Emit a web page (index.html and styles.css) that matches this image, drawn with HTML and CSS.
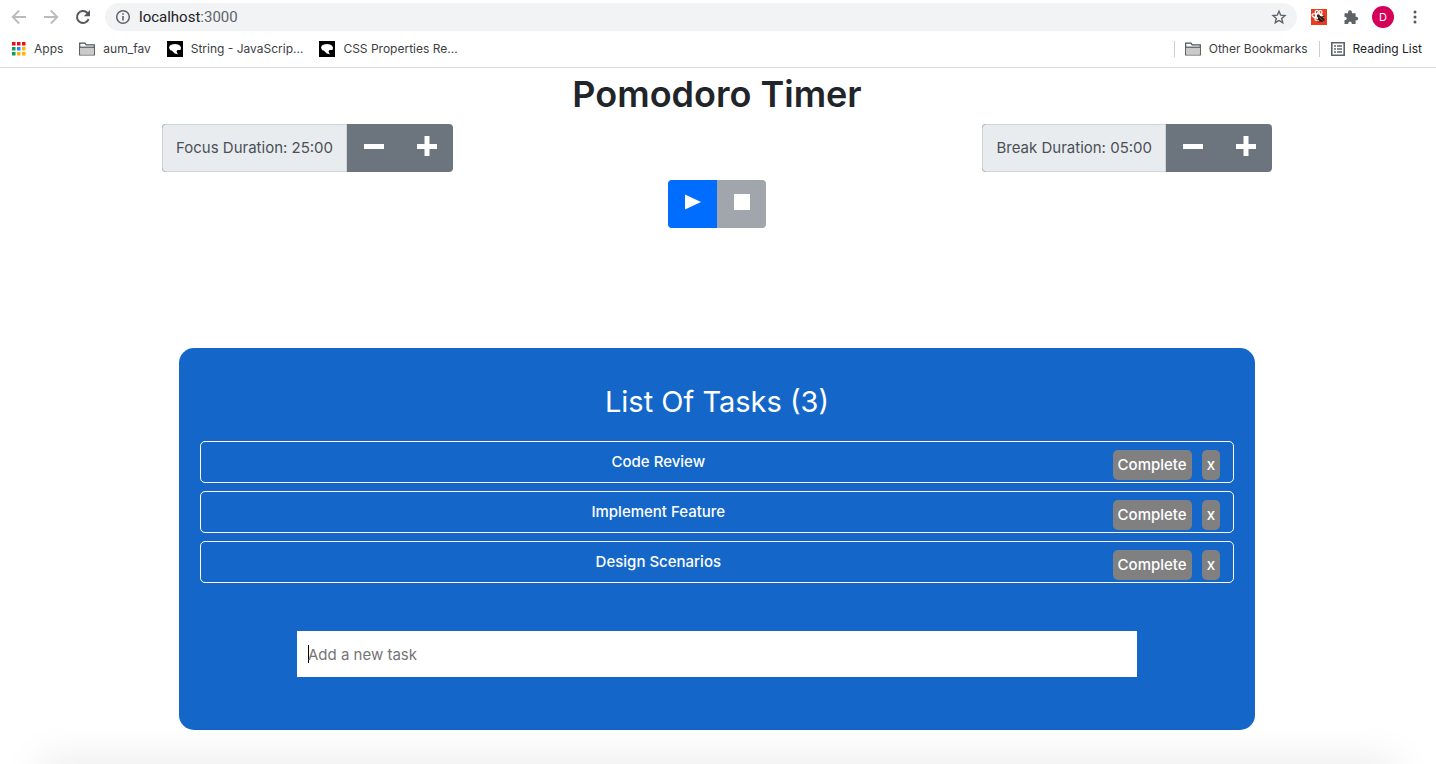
FILE: index.html
```html
<!DOCTYPE html>
<html lang="en">
<head>
<meta charset="utf-8">
<meta name="viewport" content="width=device-width, initial-scale=1">
<title>Pomodoro Timer</title>
<link rel="stylesheet" href="styles.css">
</head>
<body>
<svg class="sprite" aria-hidden="true">
  <symbol id="folder" viewBox="0 0 16 14"><path d="M.7 12.300V1.200h5.300l1.200 1.700h8.100v10.100H.7z" fill="#fff" stroke="#4d5156" stroke-width="1.200"/><path d="M1.300 5.500h13.400v7H1.300z" fill="#cacaca"/><path d="M1 5.200h14" stroke="#4d5156" stroke-width="1.200"/></symbol>
  <symbol id="dino" viewBox="0 0 16 16"><path d="M0 0h16v16H0z" fill="#000"/><path d="M2 6.500q.3-2.500 3-3 3-1.200 6 0 2.700.8 3 3.300L13.500 9h-3l-1 1.500 1.300 2.800-3-.8L5 9.800 3 9z" fill="#fff"/></symbol>
</svg>
<header class="browser">
  <div class="toolbar">
    <nav class="nav" aria-label="Browser navigation">
      <button class="icon-btn" aria-label="Back"><svg width="16" height="16" viewBox="0 0 16 16" fill="none" stroke="#b9bbbe" stroke-width="1.800"><path d="M15 8H2M8.200 1.500L1.700 8l6.500 6.500"/></svg></button>
      <button class="icon-btn" aria-label="Forward"><svg width="16" height="16" viewBox="0 0 16 16" fill="none" stroke="#b9bbbe" stroke-width="1.800"><path d="M1 8h13M7.800 1.500L14.300 8l-6.500 6.500"/></svg></button>
      <button class="icon-btn" aria-label="Reload"><svg width="16" height="16" viewBox="0 0 16 16"><path d="M13.600 10.200A6 6 0 1 1 12.300 3.800L14 5.500" fill="none" stroke="#54585d" stroke-width="2"/><path d="M15 1v6.200H8.800z" fill="#54585d"/></svg></button>
    </nav>
    <div class="address">
      <svg width="16" height="16" viewBox="0 0 16 16"><circle cx="8" cy="8" r="6.300" fill="none" stroke="#5f6368" stroke-width="1.500"/><path d="M8 7v4.500M8 4.300v1.500" stroke="#5f6368" stroke-width="1.600"/></svg>
      <span class="url">localhost<span class="port">:3000</span></span>
      <button class="icon-btn" aria-label="Bookmark this page"><svg width="16" height="16" viewBox="0 0 16 16"><path d="M8 2.200l1.700 4 4.300.4-3.300 2.900 1 4.200L8 11.500l-3.700 2.200 1-4.200L2 6.600l4.300-.4z" fill="none" stroke="#5f6368" stroke-width="1.400"/></svg></button>
    </div>
    <div class="extensions">
      <button class="icon-btn" aria-label="Bug extension"><svg width="16" height="16" viewBox="0 0 16 16"><path d="M0 0h16v16H0z" fill="#ea3d20"/><g fill="none" stroke="#fff" stroke-width="1.200"><ellipse cx="6.500" cy="7" rx="5.500" ry="2.200" transform="rotate(10 6.500 7)"/><ellipse cx="7.500" cy="6.500" rx="5.500" ry="2.200" transform="rotate(-60 7.500 6.500)"/><ellipse cx="7.500" cy="6.500" rx="5.500" ry="2.200" transform="rotate(65 7.500 6.500)"/></g><ellipse cx="10" cy="10" rx="3.300" ry="2.500" transform="rotate(40 10 10)" fill="#222"/><circle cx="7.300" cy="7" r="1.400" fill="#222"/><path d="M6 11l3-1M8 13.500l2-2M13.500 7L11 8M14 11l-3-.5" stroke="#222"/><path d="M8.500 8.500l3.500 3" stroke="#ea3d20" stroke-width=".8"/></svg></button>
      <button class="icon-btn" aria-label="Extensions"><svg width="16" height="16" viewBox="0 0 16 16"><path d="M1.500 4.200h3.600q-.3-3 1.900-3t1.900 3h3.700v3.600q2.600-.3 2.600 1.800t-2.600 1.800V15H8.900q0-2.500-1.900-2.500T5.100 15H1.500v-3.700q2.300 0 2.300-1.800T1.500 7.700z" fill="#5f6368"/></svg></button>
      <button class="avatar" aria-label="Profile D">D</button>
      <button class="icon-btn" aria-label="Menu"><svg width="16" height="16" viewBox="0 0 16 16" fill="#54585d"><circle cx="8" cy="3" r="1.500"/><circle cx="8" cy="8" r="1.500"/><circle cx="8" cy="13" r="1.500"/></svg></button>
    </div>
  </div>
  <nav class="bookmarks" aria-label="Bookmarks">
    <a class="bookmark" href="#"><svg width="14" height="14" viewBox="0 0 14 14"><path d="M0 0h3.500v3.500H0zM5 0h3.500v3.500H5zM10 0h3.500v3.500H10z" fill="#f00b12"/><path d="M0 5h3.500v3.500H0zM0 10h3.500v3.500H0z" fill="#0f9d58"/><path d="M5 5h3.500v3.500H5z" fill="#1e88f5"/><path d="M10 5h3.500v3.500H10zM10 10h3.500v3.500H10zM5 10h3.500v3.500H5z" fill="#fbb606"/></svg>Apps</a>
    <a class="bookmark" href="#"><svg width="16" height="14"><use href="#folder"/></svg>aum_fav</a>
    <a class="bookmark" href="#"><svg width="16" height="16"><use href="#dino"/></svg>String - JavaScrip...</a>
    <a class="bookmark" href="#"><svg width="16" height="16"><use href="#dino"/></svg>CSS Properties Re...</a>
    <a class="bookmark divided other" href="#"><svg width="16" height="14"><use href="#folder"/></svg>Other Bookmarks</a>
    <a class="bookmark divided reading" href="#"><svg width="14" height="14" viewBox="0 0 14 14"><path d="M.8.8h12.400v12.400H.8z" fill="none" stroke="#5f6368" stroke-width="1.600"/><path d="M3 4h2M6 4h5M3 7h2M6 7h5M3 10h2M6 10h5" stroke="#5f6368" stroke-width="1.400"/></svg>Reading List</a>
  </nav>
</header>
<main class="page">
  <h1 class="title">Pomodoro Timer</h1>
  <div class="durations">
    <div class="group">
      <span class="group-label">Focus Duration: 25:00</span>
      <button class="step" aria-label="Decrease focus duration"><svg width="22" height="22" viewBox="0 0 22 22"><path d="M1 9h20v5H1z" fill="#fff"/></svg></button>
      <button class="step" aria-label="Increase focus duration"><svg width="22" height="22" viewBox="0 0 22 22"><path d="M1 9h7.500V1h5v8H21v5h-7.500v7h-5v-7H1z" fill="#fff"/></svg></button>
    </div>
    <div class="group">
      <span class="group-label">Break Duration: 05:00</span>
      <button class="step" aria-label="Decrease break duration"><svg width="22" height="22" viewBox="0 0 22 22"><path d="M1 9h20v5H1z" fill="#fff"/></svg></button>
      <button class="step" aria-label="Increase break duration"><svg width="22" height="22" viewBox="0 0 22 22"><path d="M1 9h7.500V1h5v8H21v5h-7.500v7h-5v-7H1z" fill="#fff"/></svg></button>
    </div>
  </div>
  <div class="controls">
    <button class="control play" aria-label="Start timer"><svg width="16" height="16" viewBox="0 0 16 16"><path d="M0 .5L16 8 0 15.500z" fill="#fff"/></svg></button>
    <button class="control stop" aria-label="Stop timer" disabled><svg width="16" height="16" viewBox="0 0 16 16"><path d="M0 0h16v16H0z" fill="#fff"/></svg></button>
  </div>
  <section class="tasks">
    <h2 class="tasks-title">List Of Tasks (3)</h2>
    <ul class="task-list">
      <li class="task"><span class="task-name">Code Review</span><button class="task-btn">Complete</button><button class="task-btn">x</button></li>
      <li class="task"><span class="task-name">Implement Feature</span><button class="task-btn">Complete</button><button class="task-btn">x</button></li>
      <li class="task"><span class="task-name">Design Scenarios</span><button class="task-btn">Complete</button><button class="task-btn">x</button></li>
    </ul>
    <form class="task-form"><input class="task-input" type="text" placeholder="Add a new task" aria-label="Add a new task" autofocus></form>
  </section>
</main>
</body>
</html>
```
FILE: styles.css
```css
* { box-sizing: border-box; }
body { margin: 0; min-height: 100vh; background: #fff; color: #212529; font: 15px/24px Inter, "Liberation Sans", sans-serif; }
body::after { content: ""; position: fixed; left: 40px; right: 40px; bottom: -20px; height: 20px; box-shadow: 0 0 40px rgba(0, 0, 0, .13); pointer-events: none; }
button { margin: 0; padding: 0; border: 0; font: inherit; color: inherit; background: none; }
svg { display: block; flex: none; }
.sprite { position: absolute; width: 0; height: 0; }

.browser { height: 68px; border-bottom: 1px solid #d9dbdd; font-size: 12px; }
.toolbar { display: flex; align-items: center; height: 34px; padding: 0 13px 0 11px; }
.nav { display: flex; gap: 16px; margin-right: 14px; }
.address { flex: 1; display: flex; align-items: center; gap: 8px; height: 28px; padding: 0 10px; border-radius: 14px; background: #f1f3f4; font: 15px/20px Roboto, sans-serif; color: #202124; }
.url { flex: 1; }
.port { color: #5f6368; }
.extensions { display: flex; align-items: center; gap: 16px; margin-left: 14px; }
.extensions .avatar { margin: 0 -3px; width: 22px; height: 22px; border-radius: 50%; background: #d50057; color: #fff; font-size: 11px; line-height: 22px; text-align: center; }
.bookmarks { display: flex; align-items: center; gap: 16px; height: 30px; padding: 0 14px 0 12px; }
.bookmark { display: flex; align-items: center; gap: 8px; color: #3c4043; text-decoration: none; line-height: 16px; white-space: nowrap; }
.divided { padding-left: 10px; border-left: 1px solid #ccced1; }
.other { margin-left: auto; }
.reading { margin-left: -5px; padding-left: 11px; color: #202124; }

.page { max-width: 1142px; margin: 0 auto; padding: 2px 17px 34px 15px; }
.title { margin: 0 0 6px; font-size: 36px; font-weight: 600; line-height: 48px; text-align: center; }
.durations { display: flex; justify-content: space-between; }
.group { display: flex; height: 48px; border-radius: 4px; overflow: hidden; background: #6c757d; }
.group-label { padding: 11px 13px; border: 1px solid #ced4da; border-radius: 4px 0 0 4px; background: #e9ecef; color: #495057; }
.step { display: grid; justify-items: center; width: 53px; padding-top: 11px; align-content: start; }
.controls { display: flex; justify-content: center; margin-top: 8px; }
.control { display: grid; justify-items: center; align-content: start; width: 49px; height: 48px; padding-top: 14px; }
.play { background: #006dff; border-radius: 4px 0 0 4px; }
.stop { background: #a0a6ab; border-radius: 0 4px 4px 0; }

.tasks { margin: 120px 17px 0; padding: 34px 21px 53px; border-radius: 15px; background: #1467c9; color: #fff; }
.tasks-title { margin: 0 0 19px; font-size: 29px; font-weight: 400; line-height: 40px; text-align: center; }
.task-list { display: grid; gap: 8px; margin: 0; padding: 0; list-style: none; font-weight: 500; }
.task { display: flex; gap: 10px; height: 42px; padding: 8px 13px; border: 1px solid #fff; border-radius: 5px; }
.task-name { flex: 1; text-align: center; }
.task-btn { height: 30px; padding: 0 5px; border-radius: 5px; background: #808080; line-height: 30px; }
.task-form { margin: 48px 97px 0; }
.task-input { display: block; width: 100%; height: 46px; padding: 0 11px; border: 0; outline: 0; font: inherit; color: #212529; caret-color: transparent; background: linear-gradient(#000, #000) 11px 14px / 1px 18px no-repeat #fff; }
.task-input:not(:placeholder-shown) { caret-color: #000; background: #fff; }
.task-input::placeholder { color: #757575; opacity: 1; }
```
